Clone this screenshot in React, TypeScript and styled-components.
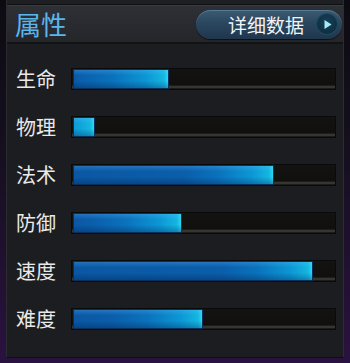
import React from 'react'
import styled, { createGlobalStyle } from 'styled-components'

const GlobalStyle = createGlobalStyle`
  html, body {
    margin: 0;
    padding: 0;
  }
  body {
    width: 350px;
    height: 363px;
    overflow: hidden;
    background: linear-gradient(to bottom, #0d0b12 0%, #150f1e 40%, #2a1240 100%);
    font-family: 'Noto Sans CJK SC', 'Noto Sans', sans-serif;
  }
`

const Panel = styled.div`
  margin-left: 6px;
  width: 338px;
  height: 358px;
  display: flex;
  flex-direction: column;
  background: #1c1d20;
  border-left: 1px solid #2a2c30;
  border-right: 1px solid #2a2c30;
  border-bottom: 1px solid #0e0e10;
  box-sizing: border-box;
`

const TopStrip = styled.div`
  height: 4px;
  background: #1e1f22;
  border-bottom: 1px solid #0f1012;
`

const Header = styled.div`
  height: 36px;
  display: flex;
  align-items: center;
  justify-content: space-between;
  padding: 0 1px 0 8px;
  background: linear-gradient(to bottom, #2d3035 0%, #282a2f 60%, #24262a 100%);
  border-top: 1px solid #383b40;
  border-bottom: 2px solid #121315;
`

const Title = styled.h1`
  margin: 0;
  font-size: 26px;
  font-weight: 400;
  line-height: 1;
  color: #5ab6ea;
`

const DetailButton = styled.button`
  width: 146px;
  height: 29px;
  display: flex;
  align-items: center;
  justify-content: flex-end;
  gap: 13px;
  padding: 0 5px 0 0;
  border: none;
  border-radius: 15px;
  background: linear-gradient(to bottom, #3c5a72 0%, #2a4760 45%, #1f364c 100%);
  box-shadow: inset 0 1px 0 rgba(140, 180, 210, 0.35), 0 1px 1px rgba(0, 0, 0, 0.6);
  color: #f2f4f6;
  font-family: inherit;
  font-size: 19px;
  line-height: 1;
  cursor: pointer;
`

const PlayBadge = styled.span`
  width: 20px;
  height: 20px;
  border-radius: 50%;
  background: radial-gradient(circle at 50% 40%, #17405a 0%, #0c2838 100%);
  box-shadow: 0 0 0 1px #1d4a60;
  display: flex;
  align-items: center;
  justify-content: center;
`

const Body = styled.div`
  display: flex;
  flex-direction: column;
  padding: 11px 7px 0 9px;
`

const StatRow = styled.div`
  height: 48px;
  display: flex;
  align-items: center;
`

const Label = styled.span`
  width: 55px;
  font-size: 20px;
  line-height: 1;
  color: #e9e9e9;
`

const Track = styled.div`
  flex: 1;
  height: 22px;
  box-sizing: border-box;
  padding: 1px 1px 1px 2px;
  box-shadow: inset 0 0 0 1px #0a0a09;
  background: linear-gradient(
    to bottom,
    #131311 0%,
    #0f0f0d 78%,
    #34332e 82%,
    #3a3934 88%,
    #171714 94%,
    #0e0e0c 100%
  );
`

const Fill = styled.div`
  height: 100%;
  box-sizing: border-box;
  border: 1px solid #07305c;
  background:
    linear-gradient(
      to bottom,
      rgba(120, 190, 255, 0.25) 0%,
      rgba(120, 190, 255, 0) 30%,
      rgba(0, 0, 0, 0) 60%,
      rgba(0, 20, 60, 0.3) 100%
    ),
    linear-gradient(
      to left,
      #2ad8ee 0px,
      #14b6e2 4px,
      #0c96d4 22px,
      #0a72bc 55px,
      #0a5eaa 90px,
      #0a58a4 100%
    );
`

const stats = [
  { name: '生命', value: 0.366 },
  { name: '物理', value: 0.084 },
  { name: '法术', value: 0.767 },
  { name: '防御', value: 0.416 },
  { name: '速度', value: 0.916 },
  { name: '难度', value: 0.496 },
]

const App: React.FC = () => (
  <>
    <GlobalStyle />
    <Panel>
      <TopStrip />
      <Header>
        <Title>属性</Title>
        <DetailButton>
          详细数据
          <PlayBadge>
            <svg width="9" height="11" viewBox="0 0 9 11">
              <path d="M1.5 1 L8.5 5.5 L1.5 10 Z" fill="#a6eaf6" />
            </svg>
          </PlayBadge>
        </DetailButton>
      </Header>
      <Body>
        {stats.map(s => (
          <StatRow key={s.name}>
            <Label>{s.name}</Label>
            <Track>
              <Fill style={{ width: `${s.value * 100}%` }} />
            </Track>
          </StatRow>
        ))}
      </Body>
    </Panel>
  </>
)

export default App
